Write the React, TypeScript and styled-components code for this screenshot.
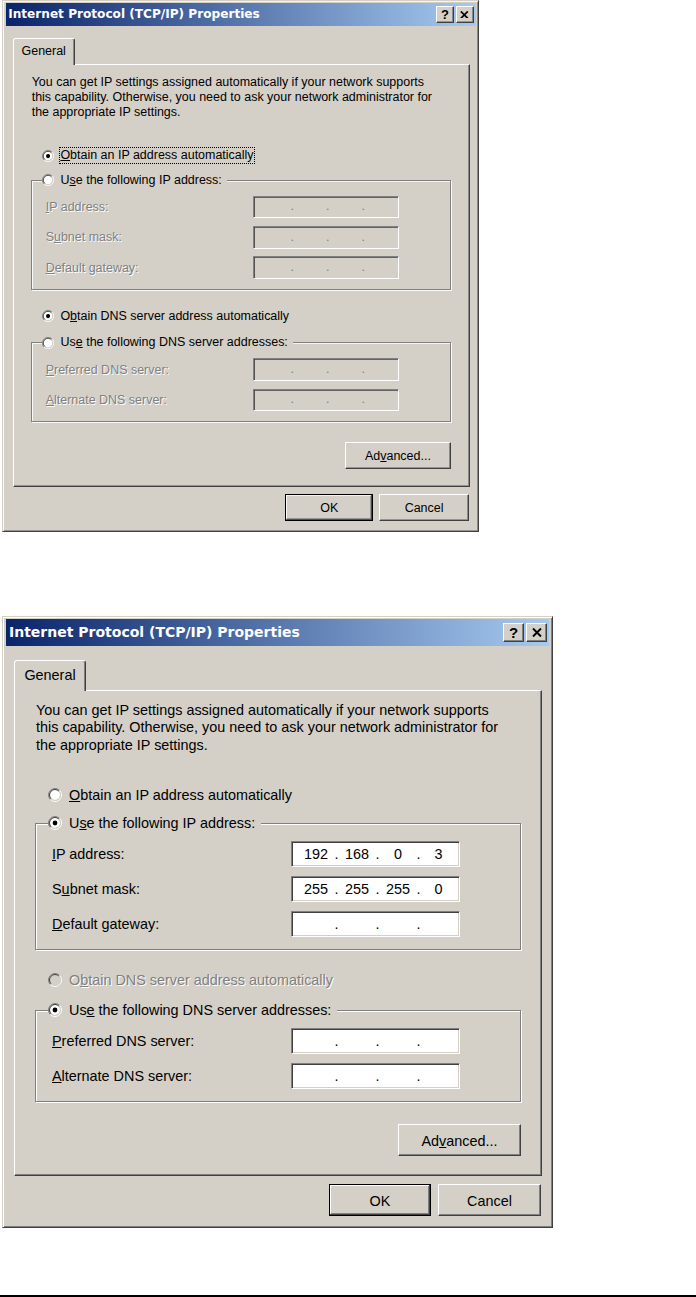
import React from 'react'
import styled, { createGlobalStyle, css } from 'styled-components'

// Classic Windows 2000 palette
const FACE = '#d4d0c8'
const SHADOW = '#808080'
const DARK = '#404040'
const UI_FONT = '"Liberation Sans", Arial, sans-serif'

const GlobalStyle = createGlobalStyle`
  html, body {
    margin: 0;
    background: #fff;
  }
  body {
    font-family: ${UI_FONT};
  }
`

const Page = styled.main`
  width: 696px;
  height: 1297px;
  display: flex;
  flex-direction: column;
`

const Shots = styled.div`
  display: flex;
  flex-direction: column;
  align-items: flex-start;
  padding-left: 2px;
`

const Window = styled.section<{ $zoom: number; $top: number }>`
  zoom: ${p => p.$zoom};
  margin-top: ${p => p.$top}px;
  width: 551px;
  box-sizing: border-box;
  background: ${FACE};
  border: 1px solid;
  border-color: ${FACE} ${DARK} ${DARK} ${FACE};
  box-shadow: inset 1px 1px #fff, inset -1px -1px ${SHADOW};
  padding: 2px 3px 3px 3px;
  font-family: ${UI_FONT};
  font-size: 14.4px;
  color: #000;
`

const TitleBar = styled.header`
  display: flex;
  align-items: center;
  height: 27px;
  padding: 0 2px 0 3px;
  background: linear-gradient(to right, #0a246a, #a6caf0);
`

const Caption = styled.h1`
  flex: 1;
  margin: 0;
  color: #fff;
  font: bold 14px "DejaVu Sans", Verdana, sans-serif;
  white-space: nowrap;
`

const CaptionButtons = styled.div`
  display: flex;
  gap: 2px;
`

const CaptionButton = styled.span`
  width: 21px;
  height: 19px;
  box-sizing: border-box;
  display: flex;
  align-items: center;
  justify-content: center;
  background: ${FACE};
  border: 1px solid;
  border-color: #fff ${DARK} ${DARK} #fff;
  box-shadow: inset -1px -1px ${SHADOW};
  font: bold 15px ${UI_FONT};
  line-height: 1;
  color: #000;
`

const Body = styled.div`
  padding: 14px 7px 0 8px;
`

const Tab = styled.div`
  position: relative;
  z-index: 1;
  width: 72px;
  height: 31px;
  margin-bottom: -1px;
  box-sizing: border-box;
  display: flex;
  align-items: center;
  justify-content: center;
  padding-bottom: 2px;
  background: ${FACE};
  border: 1px solid;
  border-bottom: none;
  border-color: #fff ${DARK} transparent #fff;
  border-radius: 3px 3px 0 0;
  box-shadow: inset -1px 0 ${SHADOW};
`

const Panel = styled.div`
  border: 1px solid;
  border-color: #fff ${DARK} ${DARK} #fff;
  box-shadow: inset -1px -1px ${SHADOW};
  padding: 11px 20px 19px 20px;
  display: flex;
  flex-direction: column;
`

const Intro = styled.p`
  margin: 0 0 0 1px;
  line-height: 17.5px;
`

const Choice = styled.div<{ $gap: number }>`
  margin-top: ${p => p.$gap}px;
  padding-left: 13px;
`

const RadioRow = styled.span<{ $disabled?: boolean }>`
  display: inline-flex;
  align-items: center;
  gap: 5px;
  height: 20px;
  padding-right: 4px;
  background: ${FACE};
  color: ${p => (p.$disabled ? SHADOW : '#000')};
  ${p =>
    p.$disabled &&
    css`
      text-shadow: 1px 1px 0 #fff;
    `}
`

const RadioText = styled.span<{ $focused?: boolean }>`
  padding: 0 1px;
  border: 1px dotted ${p => (p.$focused ? '#000' : 'transparent')};
  line-height: 17px;
  white-space: nowrap;
`

const Group = styled.fieldset<{ $gap: number }>`
  margin: ${p => p.$gap}px 0 0 0;
  padding: 8px 13px 12px 12px;
  border: 1px solid ${SHADOW};
  box-shadow: inset 1px 1px #fff, 1px 1px #fff;
  display: flex;
  flex-direction: column;
  gap: 9px;
`

const GroupLegend = styled.legend`
  padding: 0;
  height: 20px;
  display: flex;
`

const FieldRow = styled.div<{ $disabled?: boolean }>`
  display: grid;
  grid-template-columns: 239px 169px;
  align-items: center;
  padding-left: 4px;
  height: 26px;
  color: ${p => (p.$disabled ? SHADOW : '#000')};
  ${p =>
    p.$disabled &&
    css`
      text-shadow: 1px 1px 0 #fff;
    `}
`

const IpBox = styled.div<{ $disabled?: boolean }>`
  height: 26px;
  box-sizing: border-box;
  display: grid;
  grid-template-columns: 38px 3px 38px 3px 38px 3px 37px;
  align-items: center;
  padding-left: 5px;
  background: ${p => (p.$disabled ? FACE : '#fff')};
  border: 1px solid;
  border-color: ${SHADOW} #fff #fff ${SHADOW};
  box-shadow: inset 1px 1px ${DARK}, inset -1px -1px ${FACE};
  text-shadow: none;
  color: ${p => (p.$disabled ? SHADOW : '#000')};
`

const Octet = styled.span`
  text-align: center;
  line-height: 20px;
`

const Dot = styled.span`
  display: flex;
  justify-content: center;
  line-height: 20px;
`

const ButtonRow = styled.div<{ $gap: number }>`
  display: flex;
  justify-content: flex-end;
  gap: 7px;
  margin-top: ${p => p.$gap}px;
`

const Footer = styled(ButtonRow)`
  padding: 0 1px 8px 0;
`

const PushButton = styled.span<{ $width: number; $default?: boolean }>`
  width: ${p => p.$width}px;
  height: 32px;
  box-sizing: border-box;
  display: flex;
  align-items: center;
  justify-content: center;
  background: ${FACE};
  border: 1px solid;
  border-color: #fff ${DARK} ${DARK} #fff;
  box-shadow: inset -1px -1px ${SHADOW};
  padding-top: 1px;
  ${p =>
    p.$default &&
    css`
      border-color: #000;
      box-shadow: inset -1px -1px ${DARK}, inset 1px 1px #fff, inset -2px -2px ${SHADOW};
    `}
`

const Rule = styled.hr`
  width: 100%;
  height: 2px;
  margin: auto 0 0 0;
  border: none;
  background: #000;
`

function Radio({ checked, disabled }: { checked?: boolean; disabled?: boolean }) {
  return (
    <svg width="14" height="14" viewBox="0 0 14 14" style={{ flex: 'none' }}>
      <circle cx="7" cy="7" r="5" fill={disabled ? FACE : '#fff'} />
      <path d="M2.4 11.6A6.5 6.5 0 0 1 11.6 2.4" stroke={SHADOW} fill="none" />
      <path d="M11.6 2.4A6.5 6.5 0 0 1 2.4 11.6" stroke="#fff" fill="none" />
      <path d="M3.11 10.89A5.5 5.5 0 0 1 10.89 3.11" stroke={DARK} fill="none" />
      <path d="M10.89 3.11A5.5 5.5 0 0 1 3.11 10.89" stroke={FACE} fill="none" />
      {checked && <circle cx="7" cy="7" r="2.4" fill={disabled ? SHADOW : '#000'} />}
    </svg>
  )
}

interface OptionProps {
  checked?: boolean
  disabled?: boolean
  focused?: boolean
  children: React.ReactNode
}

const Option = ({ checked, disabled, focused, children }: OptionProps) => (
  <RadioRow $disabled={disabled}>
    <Radio checked={checked} disabled={disabled} />
    <RadioText $focused={focused}>{children}</RadioText>
  </RadioRow>
)

const IpField = ({ value, disabled }: { value: string[]; disabled?: boolean }) => (
  <IpBox $disabled={disabled}>
    {value.map((octet, i) => (
      <React.Fragment key={i}>
        {i > 0 && <Dot>.</Dot>}
        <Octet>{octet}</Octet>
      </React.Fragment>
    ))}
  </IpBox>
)

const EMPTY = ['', '', '', '']

interface DialogState {
  zoom: number
  top: number
  autoIp: boolean
  focusAutoIp?: boolean
  ip: string[][]
  autoDnsDisabled?: boolean
  autoDns: boolean
}

const ipLabels = [
  <><u>I</u>P address:</>,
  <>S<u>u</u>bnet mask:</>,
  <><u>D</u>efault gateway:</>,
]

const dnsLabels = [
  <><u>P</u>referred DNS server:</>,
  <><u>A</u>lternate DNS server:</>,
]

function TcpIpDialog(props: DialogState) {
  const { zoom, top, autoIp, focusAutoIp, ip, autoDnsDisabled, autoDns } = props
  const dnsManual = !autoDns

  return (
    <Window $zoom={zoom} $top={top}>
      <TitleBar>
        <Caption>Internet Protocol (TCP/IP) Properties</Caption>
        <CaptionButtons>
          <CaptionButton>?</CaptionButton>
          <CaptionButton>
            <svg width="10" height="9" viewBox="0 0 10 9">
              <path d="M1 0.5L9 8.5M9 0.5L1 8.5" stroke="#000" strokeWidth="2" />
            </svg>
          </CaptionButton>
        </CaptionButtons>
      </TitleBar>

      <Body>
        <Tab>General</Tab>
        <Panel>
          <Intro>
            You can get IP settings assigned automatically if your network supports
            <br />
            this capability. Otherwise, you need to ask your network administrator for
            <br />
            the appropriate IP settings.
          </Intro>

          <Choice $gap={31}>
            <Option checked={autoIp} focused={focusAutoIp}>
              <u>O</u>btain an IP address automatically
            </Option>
          </Choice>

          <Group $gap={8}>
            <GroupLegend>
              <Option checked={!autoIp}>
                U<u>s</u>e the following IP address:
              </Option>
            </GroupLegend>
            {ipLabels.map((label, i) => (
              <FieldRow key={i} $disabled={autoIp}>
                <span>{label}</span>
                <IpField value={ip[i]} disabled={autoIp} />
              </FieldRow>
            ))}
          </Group>

          <Choice $gap={20}>
            <Option checked={autoDns} disabled={autoDnsDisabled}>
              O<u>b</u>tain DNS server address automatically
            </Option>
          </Choice>

          <Group $gap={10}>
            <GroupLegend>
              <Option checked={dnsManual}>
                Us<u>e</u> the following DNS server addresses:
              </Option>
            </GroupLegend>
            {dnsLabels.map((label, i) => (
              <FieldRow key={i} $disabled={!dnsManual}>
                <span>{label}</span>
                <IpField value={EMPTY} disabled={!dnsManual} />
              </FieldRow>
            ))}
          </Group>

          <ButtonRow $gap={22}>
            <PushButton $width={123}>
              Ad<u>v</u>anced...
            </PushButton>
          </ButtonRow>
        </Panel>

        <Footer $gap={8}>
          <PushButton $width={102} $default>
            OK
          </PushButton>
          <PushButton $width={103}>Cancel</PushButton>
        </Footer>
      </Body>
    </Window>
  )
}

export default function App() {
  return (
    <>
      <GlobalStyle />
      <Page>
        <Shots>
          <TcpIpDialog
            zoom={0.866}
            top={0}
            autoIp
            focusAutoIp
            ip={[EMPTY, EMPTY, EMPTY]}
            autoDns
          />
          <TcpIpDialog
            zoom={1}
            top={84}
            autoIp={false}
            ip={[['192', '168', '0', '3'], ['255', '255', '255', '0'], EMPTY]}
            autoDnsDisabled
            autoDns={false}
          />
        </Shots>
        <Rule />
      </Page>
    </>
  )
}
